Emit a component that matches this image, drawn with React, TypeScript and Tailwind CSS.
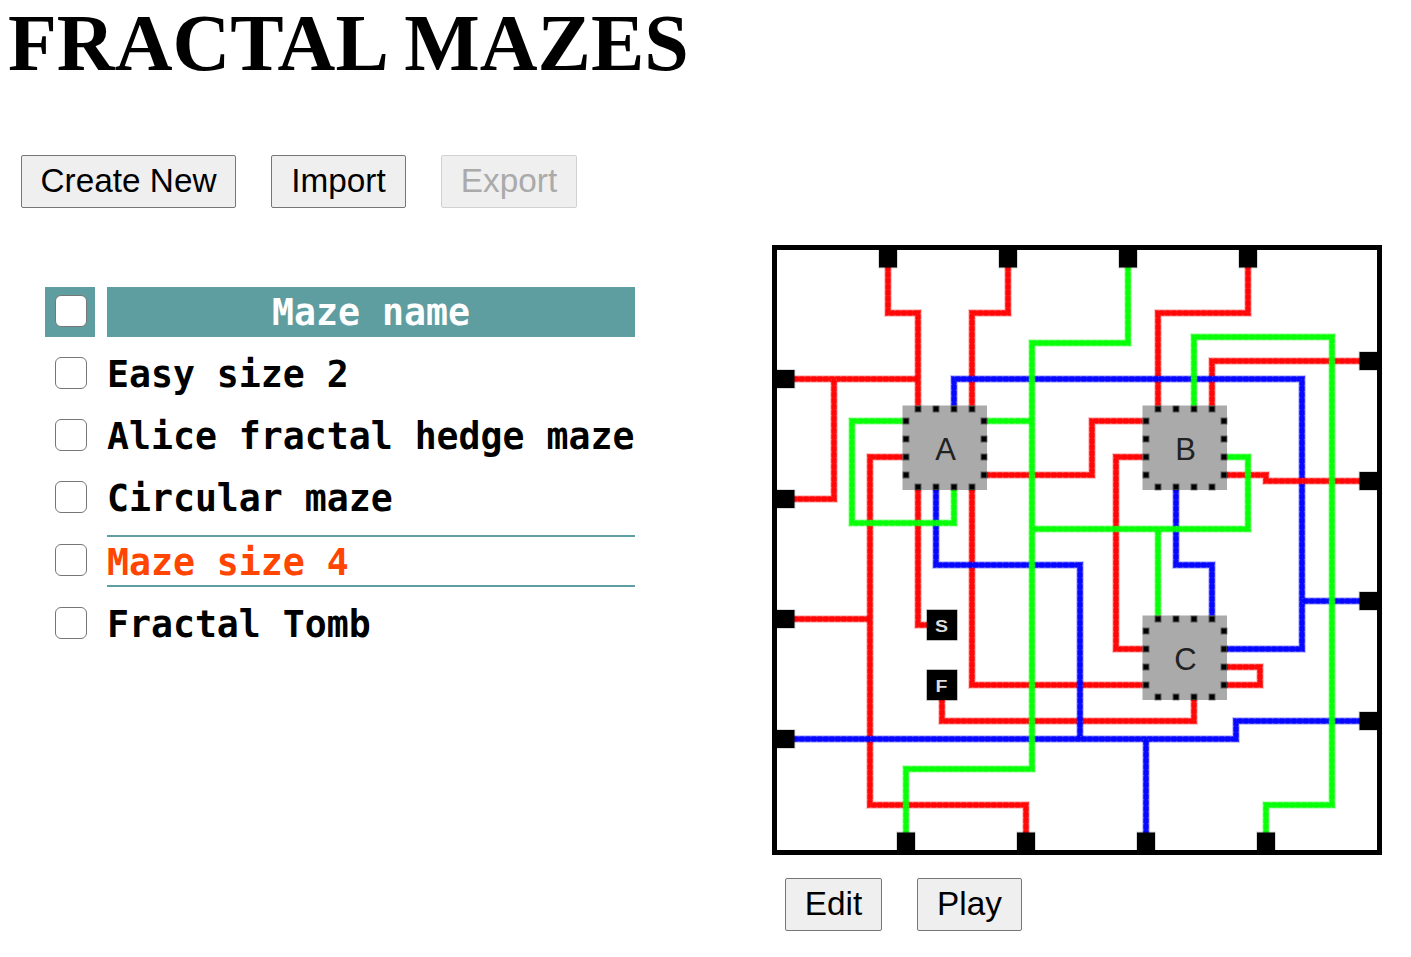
import { useState } from "react";
import type { ReactNode } from "react";

type Wire = { color: string; d: string };
type Chip = { label: string; x: number; y: number };

const RED = "#ff0000";
const GREEN = "#00ff00";
const BLUE = "#0000ff";

const WIRES: Wire[] = [
  { color: RED, d: "M888 265V313H918V409" },
  { color: RED, d: "M792 379H918" },
  { color: RED, d: "M834 379V499H792" },
  { color: RED, d: "M1008 265V313H972V409" },
  { color: RED, d: "M906 457H870V805H1026V835" },
  { color: RED, d: "M792 619H870" },
  { color: RED, d: "M918 487V625H930" },
  { color: RED, d: "M972 487V685H1146" },
  { color: RED, d: "M942 697V721H1194V697" },
  { color: RED, d: "M984 475H1092V421H1146" },
  { color: RED, d: "M1146 457H1116V649H1146" },
  { color: RED, d: "M1158 409V313H1248V265" },
  { color: RED, d: "M1212 409V361H1362" },
  { color: RED, d: "M1224 667H1260V685H1224" },
  { color: BLUE, d: "M954 409V379H1302V649H1224" },
  { color: BLUE, d: "M1302 601H1362" },
  { color: BLUE, d: "M936 487V565H1080V739" },
  { color: BLUE, d: "M792 739H1236V721H1362" },
  { color: BLUE, d: "M1146 739V835" },
  { color: BLUE, d: "M1176 487V565H1212V619" },
  { color: RED, d: "M1224 475H1266V481H1362" },
  { color: GREEN, d: "M906 421H852V523H954V487" },
  { color: GREEN, d: "M984 421H1032" },
  { color: GREEN, d: "M1128 265V343H1032V769H906V835" },
  { color: GREEN, d: "M1032 529H1248V457H1224" },
  { color: GREEN, d: "M1158 529V619" },
  { color: GREEN, d: "M1194 409V337H1332V805H1266V835" },
];

const PORTS: [number, number][] = [
  ...[888, 1008, 1128, 1248].map((x): [number, number] => [x, 258.5]),
  ...[906, 1026, 1146, 1266].map((x): [number, number] => [x, 841.5]),
  ...[379, 499, 619, 739].map((y): [number, number] => [785.5, y]),
  ...[361, 481, 601, 721].map((y): [number, number] => [1368.5, y]),
];

const CHIPS: Chip[] = [
  { label: "A", x: 945, y: 448 },
  { label: "B", x: 1185, y: 448 },
  { label: "C", x: 1185, y: 658 },
];

const PIN_OFFSETS = [-27, -9, 9, 27];

function ChipShape({ label, x, y }: Chip) {
  const pins = PIN_OFFSETS.flatMap((o) => [
    [x + o, y - 39],
    [x + o, y + 39],
    [x - 39, y + o],
    [x + 39, y + o],
  ]);
  return (
    <g>
      <rect x={x - 42.5} y={y - 42.5} width="84.5" height="84.5" fill="#aaaaaa" />
      {pins.map(([px, py]) => (
        <g key={`${px}-${py}`}>
          <rect x={px - 3.5} y={py - 3.5} width="7" height="7" fill="#000" opacity="0.45" />
          <rect x={px - 2.5} y={py - 2.5} width="5" height="5" fill="#000" />
        </g>
      ))}
      <text
        x={x + 0.5}
        y={y + 12}
        textAnchor="middle"
        fill="#222"
        className="font-['Liberation_Sans',sans-serif] text-[31px]"
      >
        {label}
      </text>
    </g>
  );
}

function Terminal({ label, y }: { label: string; y: number }) {
  return (
    <g>
      <rect x="926.5" y={y - 0.5} width="31" height="31" fill="#000" opacity="0.5" />
      <rect x="927" y={y} width="30" height="30" fill="#000" />
      <text
        transform={`translate(941.5 ${y + 22}) scale(1.15 1)`}
        textAnchor="middle"
        fill="#ddd"
        className="font-['Liberation_Sans',sans-serif] text-[17px] font-bold"
      >
        {label}
      </text>
    </g>
  );
}

function MazePreview() {
  return (
    <svg viewBox="777 250 600 600" className="block h-[600px] w-[600px]">
      {WIRES.map(({ color, d }) => (
        <g key={d} fill="none" stroke={color}>
          <path d={d} strokeWidth="8" strokeOpacity="0.22" />
          <path d={d} strokeWidth="6" strokeOpacity="0.75" />
          <path d={d} stroke="#fff" strokeWidth="6" strokeOpacity="0.22" strokeDasharray="1.5 4.5" />
          <path d={d} strokeWidth="4" strokeOpacity="0.85" />
        </g>
      ))}
      {PORTS.map(([x, y]) => (
        <g key={`${x}-${y}`}>
          <rect x={x - 10} y={y - 10} width="20" height="20" fill="#000" opacity="0.14" />
          <rect x={x - 9} y={y - 9} width="18" height="18" fill="#000" />
        </g>
      ))}
      {CHIPS.map((chip) => (
        <ChipShape key={chip.label} {...chip} />
      ))}
      <Terminal label="S" y={610} />
      <Terminal label="F" y={670} />
    </svg>
  );
}

function Button({ width, disabled, children }: { width: string; disabled?: boolean; children: ReactNode }) {
  return (
    <button
      disabled={disabled}
      className={`${width} flex h-[53px] items-center justify-center rounded-[2px] border border-[#767676] bg-[#efefef] pb-[1px] font-['Liberation_Sans',Arial,sans-serif] text-[33.333px] leading-none whitespace-nowrap text-black disabled:border-[#d1d1d1] disabled:text-[#aaaaaa]`}
    >
      {children}
    </button>
  );
}

function Checkbox({ label }: { label: string }) {
  return (
    <input
      type="checkbox"
      aria-label={label}
      className="block h-8 w-8 shrink-0 appearance-none rounded-[6px] border border-[#767676] bg-white checked:bg-[#5f9ea0]"
    />
  );
}

const MAZES = ["Easy size 2", "Alice fractal hedge maze", "Circular maze", "Maze size 4", "Fractal Tomb"];

export default function App() {
  const [selected, setSelected] = useState("Maze size 4");

  return (
    <main className="h-[957px] w-full overflow-hidden bg-white text-black">
      <h1 className="h-[155px] pl-2 font-['Liberation_Serif','Times_New_Roman',serif] text-[80px] leading-[86px] font-bold whitespace-nowrap">
        FRACTAL MAZES
      </h1>
      <div className="flex gap-[35px] pl-[21px]">
        <Button width="w-[215px]">Create New</Button>
        <Button width="w-[135px]">Import</Button>
        <Button width="w-[136px]" disabled>
          Export
        </Button>
      </div>
      <div className="flex items-start pt-[37px] pl-[45px]">
        <div className="mt-[42px] flex w-[590px] flex-col gap-3 font-['DejaVu_Sans_Mono',monospace] text-[36.5px] leading-[52px] font-bold whitespace-pre">
          <div className="flex h-[50px] gap-3">
            <div className="w-[50px] bg-[#5f9ea0] pt-2 pl-[10px]">
              <Checkbox label="Select all" />
            </div>
            <div className="flex-1 bg-[#5f9ea0] text-center text-white">Maze name</div>
          </div>
          {MAZES.map((name) => {
            const active = name === selected;
            return (
              <div key={name} className={active ? "flex h-[52px] gap-3" : "flex h-[50px] gap-3"}>
                <div className={active ? "w-[50px] pt-[9px] pl-[10px]" : "w-[50px] pt-2 pl-[10px]"}>
                  <Checkbox label={name} />
                </div>
                <div
                  onClick={() => setSelected(name)}
                  className={
                    active
                      ? "flex-1 cursor-pointer border-y-2 border-[#5f9ea0] text-[#ff4500]"
                      : "flex-1 cursor-pointer"
                  }
                >
                  {name}
                </div>
              </div>
            );
          })}
        </div>
        <div className="ml-[137px]">
          <div className="w-[610px] border-[5px] border-black">
            <MazePreview />
          </div>
          <div className="mt-[23px] ml-[13px] flex gap-[35px]">
            <Button width="w-[97px]">Edit</Button>
            <Button width="w-[105px]">Play</Button>
          </div>
        </div>
      </div>
    </main>
  );
}
